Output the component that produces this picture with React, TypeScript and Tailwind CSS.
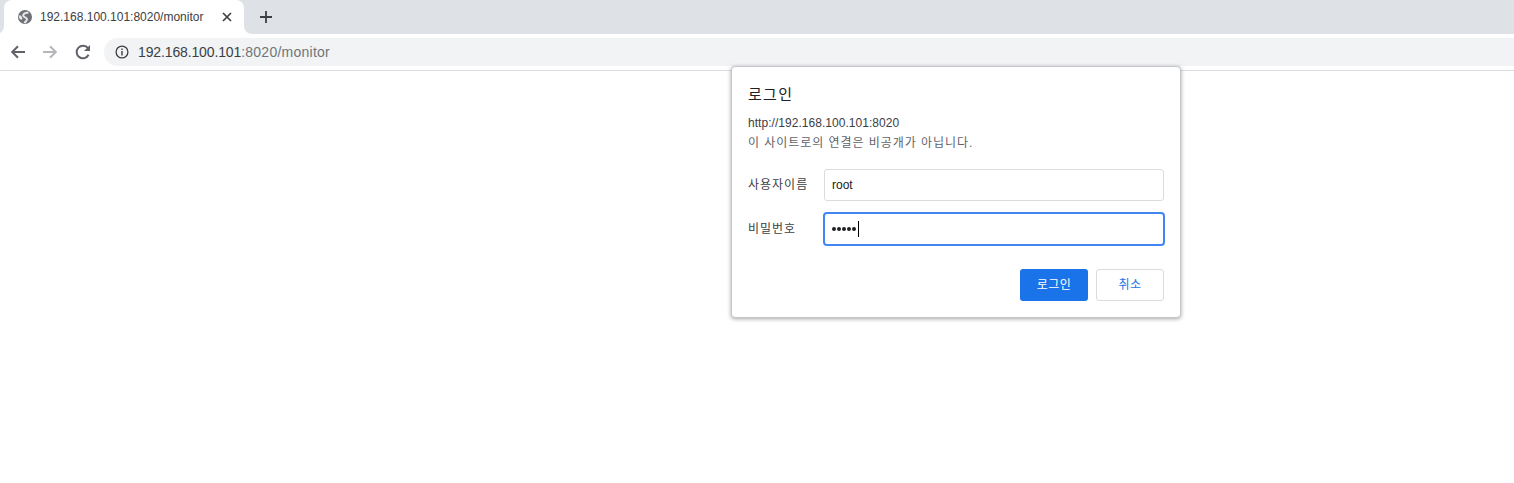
import React from "react";

const font = { fontFamily: '"Liberation Sans", Arial, "Noto Sans CJK KR", sans-serif' };

function Globe() {
  return (
    <svg width="16" height="16" viewBox="0 0 16 16" className="shrink-0">
      <circle cx="8" cy="8" r="7" fill="#6e7175" />
      <path d="M11.5 3.4 C9 3.6 6.2 4.4 6.2 6.4 C6.2 8.6 10 8 10 10.2 C10 11.8 8.4 12.6 7.4 14" fill="none" stroke="#e8e9eb" strokeWidth="2" />
      <path d="M1.6 6.4 L4 6.6 L5.6 9.6 L4.2 11 L2.4 9.6 Z" fill="#e8e9eb" />
    </svg>
  );
}

export default function App() {
  return (
    <div className="relative w-[1514px] h-[483px] bg-white overflow-hidden" style={font}>
      <div className="h-[34px] bg-[#dee1e6] flex items-end pl-[4px]">
        <div className="relative w-[240px] h-[34px] bg-white rounded-t-[8px] flex items-center pl-[13px] pr-[10px]">
          <span className="absolute left-[-4px] bottom-0 w-[4px] h-[8px] bg-white overflow-hidden">
            <span className="absolute right-0 top-0 block w-[8px] h-[8px] bg-[#dee1e6] rounded-br-[8px]" />
          </span>
          <span className="absolute right-[-8px] bottom-0 w-[8px] h-[8px] bg-white overflow-hidden">
            <span className="absolute left-0 top-0 block w-[8px] h-[8px] bg-[#dee1e6] rounded-bl-[8px]" />
          </span>
          <Globe />
          <span className="ml-[7px] text-[12px] text-[#3c4043] whitespace-nowrap flex-1">192.168.100.101:8020/monitor</span>
          <svg width="10" height="10" viewBox="0 0 10 10" className="shrink-0 mr-[2px]">
            <path d="M1 1 L9 9 M9 1 L1 9" stroke="#3c4043" strokeWidth="1.7" />
          </svg>
        </div>
        <div className="h-[34px] flex items-center ml-[15px]">
          <svg width="14" height="14" viewBox="0 0 14 14">
            <path d="M7 1 V13 M1 7 H13" stroke="#3c4043" strokeWidth="1.8" />
          </svg>
        </div>
      </div>
      <div className="h-[37px] border-b border-[#dadce0] flex items-center pl-[10px]">
        <svg width="16" height="16" viewBox="0 0 16 16" className="shrink-0">
          <path d="M15 8 H3 M8 2.2 L2.2 8 L8 13.8" fill="none" stroke="#5f6368" strokeWidth="2" />
        </svg>
        <svg width="16" height="16" viewBox="0 0 16 16" className="shrink-0 ml-[16px]">
          <path d="M1 8 H13 M8 2.2 L13.8 8 L8 13.8" fill="none" stroke="#b5b7ba" strokeWidth="2" />
        </svg>
        <svg width="16" height="16" viewBox="0 0 16 16" className="shrink-0 ml-[17px]">
          <path d="M13.6 10.8 A6.3 6.3 0 1 1 13 4.2" fill="none" stroke="#5f6368" strokeWidth="2" />
          <path d="M15 1 V7 H9 Z" fill="#5f6368" />
        </svg>
        <div className="ml-[13px] flex-1 h-[28px] bg-[#f1f3f4] rounded-l-[14px] flex items-center pl-[11px]">
          <svg width="14" height="14" viewBox="0 0 14 14" className="shrink-0">
            <circle cx="7" cy="7" r="5.9" fill="none" stroke="#3c4043" strokeWidth="1.3" />
            <path d="M7 6 V10.4 M7 3.6 V5" stroke="#3c4043" strokeWidth="1.4" />
          </svg>
          <span className="ml-[9px] text-[14px] whitespace-nowrap text-[#3c4043]">
            <span className="tracking-[-0.13px]">192.168.100.101</span><span className="text-[#70757a] tracking-[0.25px]">:8020/monitor</span>
          </span>
        </div>
      </div>

      <div className="absolute left-[731px] top-[66px] w-[450px] h-[252px] bg-white border border-[#c4c6c9] rounded-[4px] shadow-[0_1px_4px_rgba(0,0,0,0.35)] px-[16px]">
        <div className="text-[15px] leading-[20px] text-[#202124] mt-[18px] tracking-[1.3px]">로그인</div>
        <div className="text-[12px] leading-[16px] text-[#3c4043] mt-[10px] tracking-[0.04px]">http://192.168.100.101:8020</div>
        <div className="text-[12px] leading-[16px] text-[#5f6368] mt-[4px] tracking-[0.95px]">이 사이트로의 연결은 비공개가 아닙니다.</div>
        <div className="flex items-center mt-[18px]">
          <span className="w-[76px] text-[12px] text-[#3c4043] whitespace-nowrap tracking-[1px]">사용자이름</span>
          <div className="flex-1 h-[32px] border border-[#dadce0] rounded-[3px] flex items-center pl-[7px] text-[12px] text-[#202124]">root</div>
        </div>
        <div className="flex items-center mt-[11px]">
          <span className="w-[75px] text-[12px] text-[#3c4043] whitespace-nowrap tracking-[1px]">비밀번호</span>
          <div className="flex-1 h-[34px] border-2 border-[#4285f4] rounded-[4px] flex items-center pl-[7px] -mr-[1px]">
            <span className="flex gap-[1.5px]">
              <i className="w-[3.5px] h-[3.5px] rounded-full bg-[#202124]" />
              <i className="w-[3.5px] h-[3.5px] rounded-full bg-[#202124]" />
              <i className="w-[3.5px] h-[3.5px] rounded-full bg-[#202124]" />
              <i className="w-[3.5px] h-[3.5px] rounded-full bg-[#202124]" />
              <i className="w-[3.5px] h-[3.5px] rounded-full bg-[#202124]" />
            </span>
            <span className="w-[1px] h-[16px] bg-black ml-[2px]" />
          </div>
        </div>
        <div className="flex justify-end gap-[8px] mt-[23px]">
          <div className="w-[68px] h-[32px] rounded-[3px] bg-[#1a73e8] text-white text-[12px] flex items-center justify-center tracking-[0.5px]">로그인</div>
          <div className="w-[68px] h-[32px] rounded-[3px] bg-white border border-[#dadce0] text-[#1a73e8] text-[12px] flex items-center justify-center tracking-[0.5px]">취소</div>
        </div>
      </div>
    </div>
  );
}
